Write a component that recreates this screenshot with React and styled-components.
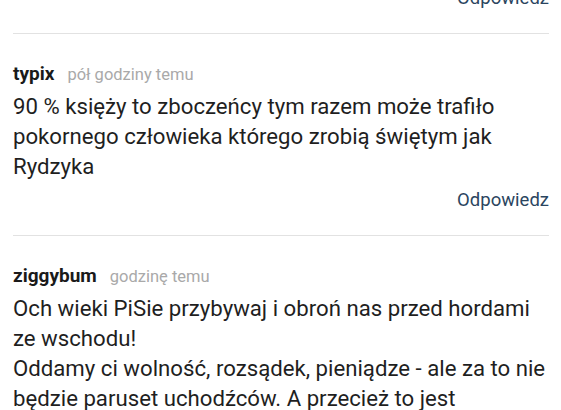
import React from 'react'
import styled, { createGlobalStyle } from 'styled-components'

const GlobalStyle = createGlobalStyle`
  html, body {
    margin: 0;
    padding: 0;
    background: #fff;
    overflow: hidden;
  }
  body {
    font-family: Roboto, "Noto Sans", sans-serif;
    color: #1f1f1f;
  }
`

const Page = styled.div`
  width: 561px;
  height: 410px;
  overflow: hidden;
  padding: 0 12px 0 13px;
  box-sizing: border-box;
`

const List = styled.div`
  margin-top: -14px;
`

const Comment = styled.div`
  padding: ${props => props.partial ? '0' : '28px'} 0 23px;
  border-bottom: 1px solid #e2e2e2;
`

const Header = styled.div`
  display: flex;
  align-items: baseline;
  gap: 13px;
  height: 24px;
  line-height: 24px;
`

const Author = styled.span`
  font-size: 19px;
  font-weight: 700;
  color: #1a1a1a;
`

const Time = styled.span`
  font-size: 16.5px;
  color: #a9a9a9;
`

const Body = styled.div`
  margin-top: 5px;
  font-size: 22.2px;
  line-height: 30px;
  color: #1f1f1f;
  white-space: pre-line;
`

const Actions = styled.div`
  display: flex;
  justify-content: flex-end;
  margin-top: ${props => props.partial ? '0' : '7px'};
`

const ReplyButton = styled.button`
  background: none;
  border: none;
  padding: 0;
  font-family: inherit;
  font-size: 18.5px;
  line-height: 24px;
  color: #2b4560;
  cursor: pointer;
`

// the last comment runs past the bottom of the screen, so its reply row isn't shown
const comments = [
  {
    author: 'typix',
    time: 'pół godziny temu',
    text: '90 % księży to zboczeńcy tym razem może trafiło pokornego człowieka którego zrobią świętym jak Rydzyka'
  },
  {
    author: 'ziggybum',
    time: 'godzinę temu',
    text: 'Och wieki PiSie przybywaj i obroń nas przed hordami ze wschodu!\nOddamy ci wolność, rozsądek, pieniądze - ale za to nie będzie paruset uchodźców. A przecież to jest',
    clipped: true
  }
]

export default function App () {
  return (
    <Page>
      <GlobalStyle />
      <List>
        <Comment partial>
          <Actions partial>
            <ReplyButton>Odpowiedz</ReplyButton>
          </Actions>
        </Comment>
        {comments.map(c => (
          <Comment key={c.author}>
            <Header>
              <Author>{c.author}</Author>
              <Time>{c.time}</Time>
            </Header>
            <Body>{c.text}</Body>
            {!c.clipped && (
              <Actions>
                <ReplyButton>Odpowiedz</ReplyButton>
              </Actions>
            )}
          </Comment>
        ))}
      </List>
    </Page>
  )
}
